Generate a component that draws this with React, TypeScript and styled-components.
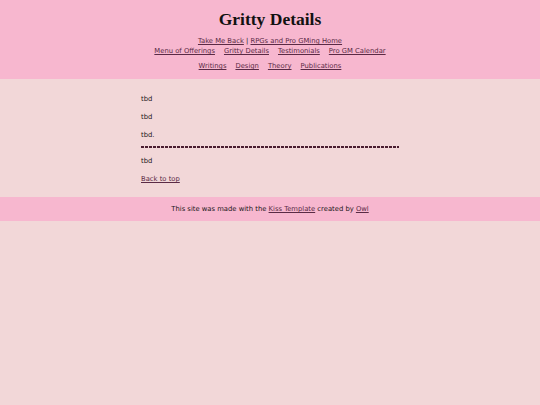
import styled, { createGlobalStyle } from "styled-components";

const GlobalStyle = createGlobalStyle`
  html, body {
    margin: 0;
    padding: 0;
    background: #f2d7d8;
  }
  body {
    font-family: "DejaVu Sans", sans-serif;
    font-size: 6.8px;
    color: #1a1618;
  }
`;

const Page = styled.div`
  min-height: 405px;
  background: #f2d7d8;
`;

const Header = styled.header`
  background: #f7b7cf;
  padding: 9px 0 8px;
  text-align: center;
`;

const Title = styled.h1`
  font-family: "Liberation Serif", serif;
  font-size: 17.5px;
  font-weight: bold;
  color: #111;
  margin: 0 0 7px;
  height: 20px;
  line-height: 20px;
`;

const TopLinks = styled.div`
  height: 10px;
  line-height: 10px;
`;

const NavRow = styled.nav<{ $top?: number }>`
  display: flex;
  justify-content: center;
  gap: 9px;
  margin-top: ${(p) => p.$top ?? 0}px;
  height: 10px;
  line-height: 10px;
`;

const Link = styled.a`
  color: #5a2a45;
  text-decoration: underline;
`;

const Main = styled.main`
  width: 258px;
  margin: 0 auto;
  padding: 16px 0 14px;
`;

const Para = styled.p`
  margin: 0 0 10px;
  height: 8px;
  line-height: 8px;

  &:last-child {
    margin-bottom: 0;
  }
`;

const Rule = styled.hr`
  border: none;
  margin: -3px 0 9px;
  height: 2px;
  background: repeating-linear-gradient(
    to right,
    #4b1d30 0 3px,
    transparent 3px 4px
  );
`;

const Footer = styled.footer`
  background: #f7b7cf;
  text-align: center;
  padding: 8px 0;
  line-height: 8px;
`;

const sections = ["Menu of Offerings", "Gritty Details", "Testimonials", "Pro GM Calendar"];
const topics = ["Writings", "Design", "Theory", "Publications"];

export default function App() {
  return (
    <Page>
      <GlobalStyle />
      <Header>
        <Title>Gritty Details</Title>
        <TopLinks>
          <Link href="#">Take Me Back</Link> | <Link href="#">RPGs and Pro GMing Home</Link>
        </TopLinks>
        <NavRow>
          {sections.map((s) => (
            <Link key={s} href="#">{s}</Link>
          ))}
        </NavRow>
        <NavRow $top={5}>
          {topics.map((s) => (
            <Link key={s} href="#">{s}</Link>
          ))}
        </NavRow>
      </Header>
      <Main id="top">
        <Para>tbd</Para>
        <Para>tbd</Para>
        <Para>tbd.</Para>
        <Rule />
        <Para>tbd</Para>
        <Para>
          <Link href="#top">Back to top</Link>
        </Para>
      </Main>
      <Footer>
        This site was made with the <Link href="#">Kiss Template</Link> created by <Link href="#">Owl</Link>
      </Footer>
    </Page>
  );
}
